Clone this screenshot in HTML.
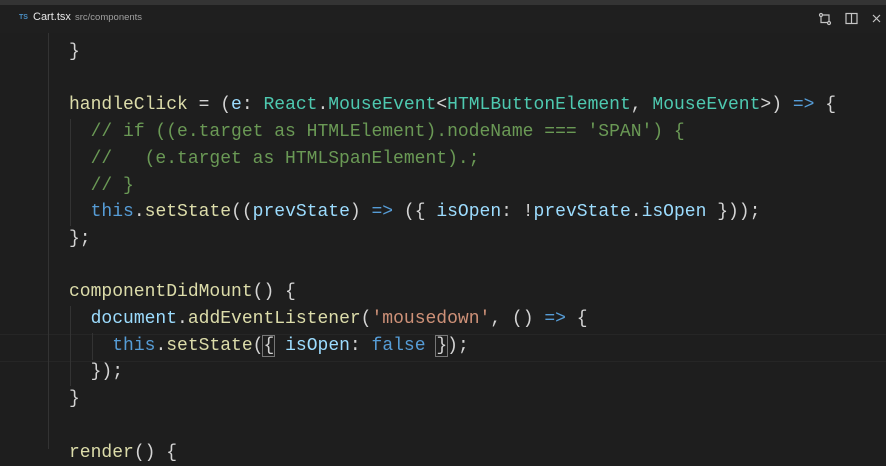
<!DOCTYPE html>
<html><head><meta charset="utf-8"><style>
html,body{margin:0;padding:0;width:886px;height:449px;overflow:hidden;background:#1e1e1e}
.top{position:absolute;left:0;top:0;width:886px;height:5px;background:#343434}
.tabs{position:absolute;left:0;top:5px;width:886px;height:28px;background:#1f1f1f;font-family:"Liberation Sans",sans-serif}
.ts{position:absolute;left:19px;top:9px;font-size:7px;color:#4a8fc4;font-weight:bold}
.name{position:absolute;left:33px;top:6px;font-size:11px;color:#e8e8e8}
.path{position:absolute;left:75px;top:7px;font-size:9.5px;color:#a0a0a0}
.code{position:absolute;left:69px;top:39px;font-family:"Liberation Mono",monospace;font-size:18px;line-height:26.7px;color:#d4d4d4;white-space:pre}
.f{color:#dcdcaa}.t{color:#4ec9b0}.c{color:#6a9955}.k{color:#569cd6}.v{color:#9cdcfe}.s{color:#ce9178}
.g{position:absolute;width:1px;background:#333}
.cur{position:absolute;left:0;top:334px;width:886px;height:26px;border-top:1px solid #262626;border-bottom:1px solid #262626}
.br{outline:1px solid #777}
</style></head><body>
<div class="top"></div>
<div class="tabs"><span class="ts">TS</span><span class="name">Cart.tsx</span><span class="path">src/components</span>
<svg style="position:absolute;left:818px;top:7px" width="14" height="14" viewBox="0 0 14 14" fill="none" stroke="#c5c5c5" stroke-width="1.2"><circle cx="3" cy="3" r="1.5"/><circle cx="11" cy="11" r="1.5"/><path d="M3 4.5v6h6M5 3h6v6"/></svg>
<svg style="position:absolute;left:845px;top:7px" width="13" height="13" viewBox="0 0 13 13" fill="none" stroke="#c5c5c5" stroke-width="1.2"><rect x="1" y="1.5" width="11" height="10"/><path d="M6.5 1.5v10"/></svg>
<svg style="position:absolute;left:872px;top:9px" width="9" height="9" viewBox="0 0 9 9" stroke="#c5c5c5" stroke-width="1.2"><path d="M1 1l7 7M8 1l-7 7"/></svg>
</div>
<div class="cur"></div>
<div class="g" style="left:48px;top:33px;height:416px"></div>
<div class="g" style="left:70px;top:119px;height:107px"></div>
<div class="g" style="left:70px;top:306px;height:80px"></div>
<div class="g" style="left:92px;top:333px;height:27px"></div>
<div class="code">}

<span class="f">handleClick</span> = (<span class="v">e</span>: <span class="t">React</span>.<span class="t">MouseEvent</span>&lt;<span class="t">HTMLButtonElement</span>, <span class="t">MouseEvent</span>&gt;) <span class="k">=&gt;</span> {
  <span class="c">// if ((e.target as HTMLElement).nodeName === 'SPAN') {</span>
  <span class="c">//   (e.target as HTMLSpanElement).;</span>
  <span class="c">// }</span>
  <span class="k">this</span>.<span class="f">setState</span>((<span class="v">prevState</span>) <span class="k">=&gt;</span> ({ <span class="v">isOpen</span>: !<span class="v">prevState</span>.<span class="v">isOpen</span> }));
};

<span class="f">componentDidMount</span>() {
  <span class="v">document</span>.<span class="f">addEventListener</span>(<span class="s">'mousedown'</span>, () <span class="k">=&gt;</span> {
    <span class="k">this</span>.<span class="f">setState</span>(<span class="br">{</span> <span class="v">isOpen</span>: <span class="k">false</span> <span class="br">}</span>);
  });
}

<span class="f">render</span>() {</div>
</body></html>
